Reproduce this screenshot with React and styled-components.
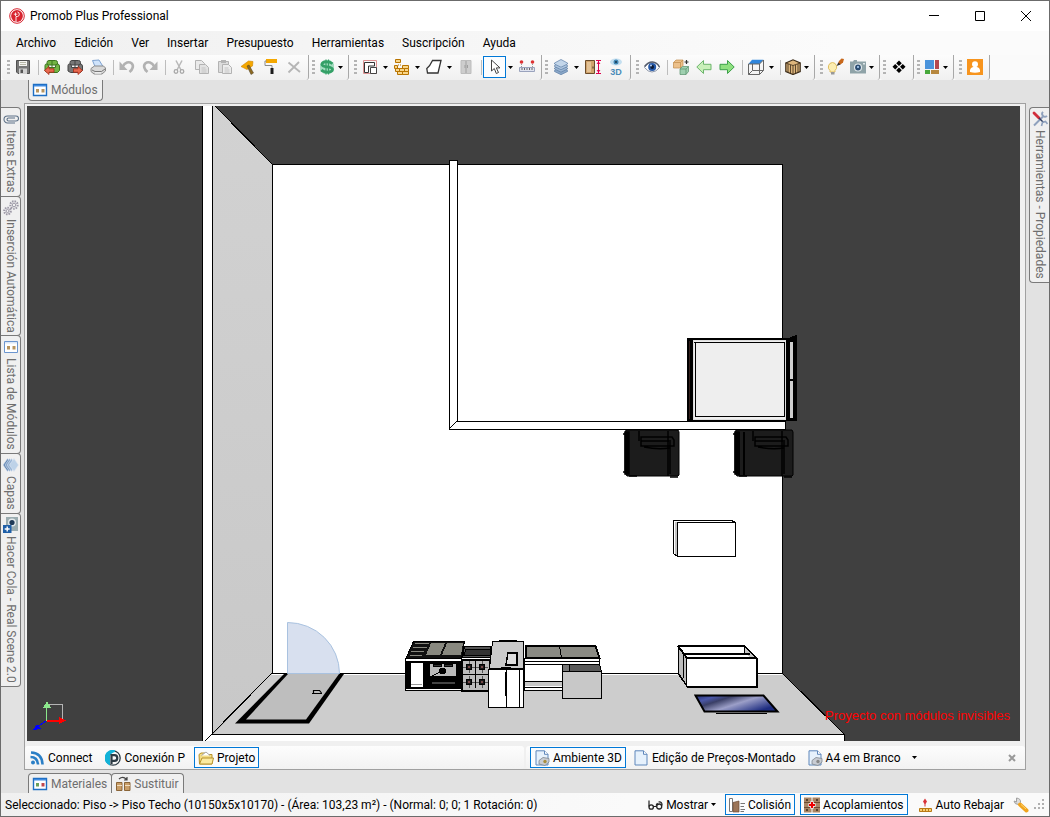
import React from "react";
import styled, { createGlobalStyle, css } from "styled-components";

const Global = createGlobalStyle`
  *, *::before, *::after { box-sizing: border-box; }
  body {
    margin: 0;
    font-family: Roboto, "Open Sans", sans-serif;
    font-size: 12px;
    line-height: 16px;
    color: #000;
  }
  button { font: inherit; color: inherit; border: 0; padding: 0; margin: 0; background: none; }
  svg { display: block; flex: none; }
`;

/* ---------- window frame ---------- */

const Window = styled.div`
  display: flex;
  flex-direction: column;
  min-height: 100vh;
  border: 1px solid #6b6b6b;
  background: #e2e2e2;
`;

const TitleBar = styled.header`
  display: flex;
  align-items: center;
  height: 30px;
  padding-left: 8px;
  background: #fff;
`;

const Title = styled.h1`
  flex: 1;
  margin: 0;
  padding-left: 5px;
  font-size: 12px;
  font-weight: 400;
`;

const WindowButton = styled.button`
  display: flex;
  align-items: center;
  justify-content: center;
  width: 46px;
  height: 30px;
`;

const MenuBar = styled.nav`
  display: flex;
  align-items: center;
  height: 24px;
  padding-left: 6px;
  background: linear-gradient(to right, #f0f0f0, #fbfbfb 80%);
`;

const MenuItem = styled.button`
  padding: 0 9px;
`;

/* ---------- main tool bar ---------- */

const ToolRow = styled.div`
  display: flex;
  height: 25px;
  padding-left: 1px;
  background: #fafafa;
`;

const ToolGroup = styled.div`
  display: flex;
  align-items: center;
  padding-left: ${(p) => (p.$wide ? 5 : 3)}px;
  padding-right: 3px;
  padding-bottom: 1px;
  border-right: 1px solid #a8a8a8;
  border-radius: 0 0 3px 3px;
  background: linear-gradient(#fcfcfc, #f0f0f0);
`;

const Grip = styled.span`
  width: 3px;
  height: 15px;
  margin-right: 1px;
  background: repeating-linear-gradient(#b4b4b4 0 2px, transparent 2px 4px);
`;

const Divider = styled.span`
  width: 1px;
  height: 15px;
  margin: 0 1px 0 4px;
  background: #bdbdbd;
`;

const ToolButton = styled.button`
  display: flex;
  align-items: center;
  justify-content: center;
  width: 23px;
  height: 22px;
  ${(p) =>
    p.$active &&
    css`
      border: 1px solid #0078d7;
      background: #fbfdff;
    `}
`;

const SplitArrow = styled(ToolButton)`
  width: 9px;
`;

const DropButton = styled(ToolButton)`
  width: 29px;
  gap: 3px;
  padding: 0 2px 0 3px;
`;

/* ---------- body ---------- */

const Body = styled.div`
  display: grid;
  grid-template-columns: 23px minmax(0, 1fr) 23px;
  flex: 1;
`;

const SideColumn = styled.aside`
  display: flex;
  flex-direction: column;
  align-items: ${(p) => (p.$right ? "flex-end" : "flex-start")};
  padding-top: 27px;
`;

const SideTab = styled.button`
  display: flex;
  align-items: center;
  gap: 3px;
  width: 20px;
  margin-bottom: -1px;
  padding: 3px 0;
  writing-mode: vertical-rl;
  line-height: 18px;
  color: #6e6e6e;
  border: 1px solid #7a7a7a;
  border-radius: ${(p) => (p.$right ? "4px 0 0 4px" : "0 4px 4px 0")};
  ${(p) => (p.$right ? "border-right: 0" : "border-left: 0")};
  background: #f0f0f0;
`;

const Center = styled.main`
  display: flex;
  flex-direction: column;
`;

const TabRow = styled.div`
  display: flex;
  height: 23px;
  padding: ${(p) => (p.$bottom ? "3px 0 0 4px" : "0 0 2px 4px")};
`;

const DockTab = styled.button`
  display: flex;
  align-items: center;
  gap: 3px;
  margin-right: -1px;
  padding: 0 4px 0 3px;
  color: #6e6e6e;
  border: 1px solid #7a7a7a;
  background: #f0f0f0;
  ${(p) =>
    p.$bottom
      ? "border-bottom: 0; border-radius: 4px 4px 0 0;"
      : "border-top: 0; border-radius: 0 0 4px 4px;"}
`;

const Frame = styled.section`
  display: flex;
  flex-direction: column;
  flex: 1;
  border: 1px solid #a0a0a0;
  background: #f0f0f0;
`;

const Viewport = styled.div`
  position: relative;
  flex: 1;
  display: flex;
  justify-content: center;
  margin: 2px 5px 5px 2px;
  background: #404040;
  > svg { width: 100%; height: 100%; }
`;

const Warning = styled.p`
  position: absolute;
  right: 10px;
  bottom: 17px;
  margin: 0;
  font-family: "Liberation Sans", Arial, sans-serif;
  font-size: 13px;
  color: #ff0000;
`;

const PageBar = styled.div`
  display: grid;
  grid-template-columns: 1fr 1fr;
  gap: 2px;
  height: 23px;
`;

const PageStrip = styled.div`
  display: flex;
  align-items: center;
  gap: ${(p) => (p.$main ? 3 : 5)}px;
  padding: ${(p) => (p.$main ? "0 5px 0 4px" : "0")};
  border-radius: 3px;
  background: linear-gradient(#fdfdfd, #f2f2f2);
`;

const TextButton = styled.button`
  display: flex;
  align-items: center;
  gap: 3px;
  height: 21px;
  padding: 0 3px;
  white-space: nowrap;
  border: 1px solid ${(p) => (p.$active ? "#0078d7" : "transparent")};
  background: ${(p) => (p.$active ? "#fafcfe" : "none")};
`;

const Spacer = styled.span`
  flex: 1;
`;

/* ---------- status bar ---------- */

const StatusBar = styled.footer`
  display: flex;
  align-items: center;
  height: 23px;
  padding: 0 4px;
  background: linear-gradient(to right, #f0f0f0, #fafafa 60%);
`;

const StatusText = styled.span`
  flex: 1;
  white-space: nowrap;
`;

const StatusActions = styled.div`
  display: flex;
  align-items: center;
  gap: 5px;
`;

/* ---------- icons ---------- */

const Icon = ({ children, size = 16 }) => (
  <svg width={size} height={size} viewBox="0 0 16 16" fill="none" aria-hidden="true">
    {children}
  </svg>
);

const Caret = () => (
  <svg width="5" height="3" viewBox="0 0 5 3" aria-hidden="true">
    <path d="M0 0h5L2.500 3z" fill="#000" />
  </svg>
);

const Logo = () => (
  <Icon>
    <circle cx="8" cy="8" r="7.300" fill="#fff" stroke="#d8232f" strokeWidth="1" />
    <circle cx="8" cy="8" r="5.900" fill="#d8232f" />
    <path d="M7 14V8.500h1.500a2.300 2.300 0 0 0 0-4.500" stroke="#fff" strokeWidth=".9" />
    <path d="M6.500 4.500v3.500M4.800 6.200h3.500" stroke="#fff" strokeWidth=".8" />
  </Icon>
);

const Save = () => (
  <Icon>
    <path d="M1.500 1.500h13v13H3L1.500 13z" fill="#777" stroke="#505050" />
    <path d="M4 2h8v5H4z" fill="#f3f3f0" />
    <path d="M5 3.500h6M5 5.500h6" stroke="#b8b8a8" />
    <path d="M4 9.500h8V15H4z" fill="#d0d0d0" />
    <path d="M5.500 10.500H8V14H5.500z" fill="#555" />
  </Icon>
);

const Sofa = ({ color, dark, out }) => (
  <Icon>
    <path d="M3 6V3.500Q3 1.500 5 1.500h6.500q2 0 2 2V6z" fill={color} stroke={dark} />
    <path d="M1 6.500Q1 5 2.500 5T4.500 7v1.500h7V7q.3-2 2-2t2 2v4.500l-2 2h-10L1 12z" fill={color} stroke={dark} />
    <path d="M8 2v6" stroke={dark} />
    {out ? (
      <path d="M15.500 11.500 11 7.500v2.300H6.500v3.400H11v2.300z" fill="#e8694f" stroke="#a62a16" strokeWidth=".8" />
    ) : (
      <path d="M.5 11.500 5 7.500v2.300h5v3.400H5v2.300z" fill="#e8694f" stroke="#a62a16" strokeWidth=".8" />
    )}
  </Icon>
);

const Printer = () => (
  <Icon>
    <path d="M2.500 1.500 9 1l4 6.500H5z" fill="#cfe3fb" stroke="#7ea2d0" />
    <path d="M1 9.500 4.500 7h9L15.500 9v3L12 15H4l-3-2.500z" fill="#d9d9d9" stroke="#8a8a8a" />
    <path d="M2 11l3 1.500h6.500L15 10" stroke="#777" />
    <path d="M5 14h6" stroke="#fff" />
  </Icon>
);

const Undo = ({ flip }) => (
  <Icon>
    <g transform={flip ? "translate(16 0) scale(-1 1)" : undefined}>
      <path d="M3.500 8C6 3.200 10 2.200 12.500 4.200c2.500 2.200 1.500 6-2 8.800" stroke="#b2b2b2" strokeWidth="2.600" />
      <path d="M.5 2.500v8.500H8.500z" fill="#b2b2b2" />
    </g>
  </Icon>
);

const Cut = () => (
  <Icon>
    <path d="M5 1.500 10 11M11 1.500 6 11" stroke="#b8b8b8" strokeWidth="1.500" />
    <circle cx="5" cy="12.500" r="1.800" stroke="#a8a8a8" strokeWidth="1.300" />
    <circle cx="11" cy="12.500" r="1.800" stroke="#a8a8a8" strokeWidth="1.300" />
  </Icon>
);

const Copy = () => (
  <Icon>
    <path d="M1.500 1.500h6l3 3v6h-9z" fill="#eaeaea" stroke="#b3b3b3" />
    <path d="M5.500 5.500h6l3 3v6h-9z" fill="#e2e2e2" stroke="#b3b3b3" />
    <path d="M7.500 9h4M7.500 11h5M7.500 13h5" stroke="#c4c4c4" />
  </Icon>
);

const Paste = () => (
  <Icon>
    <path d="M1.500 2.500h10v11h-10z" fill="#dcdcdc" stroke="#b3b3b3" />
    <path d="M4 1h5v3H4z" fill="#b3b3b3" />
    <path d="M5.500 5.500h6l3 3v6h-9z" fill="#ececec" stroke="#b3b3b3" />
    <path d="M7.500 9h4M7.500 11h5M7.500 13h5" stroke="#c4c4c4" />
  </Icon>
);

const Brush = () => (
  <Icon>
    <path d="M1 7.500 8.500 2l4.500.5L12.500 7 7 10.500z" fill="#f5a800" stroke="#cf8400" strokeWidth=".6" />
    <path d="M7 7l2-1 4.500 8-2.500 1.500z" fill="#8d6a22" stroke="#4c3d20" strokeWidth=".5" />
  </Icon>
);

const Roller = () => (
  <Icon>
    <path d="M3 0h11v4H3z" fill="#f5a800" />
    <path d="M3.500 2H2v4.500h7V9" stroke="#8a8a8a" />
    <path d="M7.500 9h3v6h-3z" fill="#1c1c1c" />
  </Icon>
);

const Remove = () => (
  <Icon>
    <path d="M2.500 3.500 14 13M13 3 2.500 13.500" stroke="#b5b5b5" strokeWidth="1.800" />
  </Icon>
);

const DollarMark = () => (
  <Icon>
    <path d="M5 1h6l4 4v6l-4 4H5l-4-4V5z" fill="#a4dcc0" />
    <path d="M13.500 4.800C11 2.500 3 2 3 5.500c0 3.600 10.500 1.300 10.500 5 0 3.600-9 3-11.200.5" stroke="#35a067" strokeWidth="2.800" />
    <path d="M7 .5v15M9.500 .5v15" stroke="#35a067" strokeWidth="1.200" />
  </Icon>
);

const Walls = () => (
  <Icon>
    <path d="M1.500 1.500h13v13h-13z" stroke="#dc9292" />
    <path d="M2.500 13.500v-10h10v3.500h-6v6.500z" fill="#fff" stroke="#333" />
    <path d="M8.500 14.500v-6h6v6z" fill="#fff" stroke="#444" />
  </Icon>
);

const Bricks = () => (
  <Icon>
    <g fill="#f9d68a" stroke="#b87400">
      <path d="M1.500 .5h5v3h-5zM5.500 9.500h5v3h-5zM.5 6.500h3v3h-3zM8.500 6.500h6v3h-6z" />
      <path d="M10.500 9.500h4v3h-4zM1.500 9.500h4v3h-4zM3.500 12.500h5v3h-5zM8.500 12.500h6v3h-6z" />
    </g>
    <path d="M4 6h4" stroke="#b87400" strokeDasharray="1 1" />
  </Icon>
);

const Shape = () => (
  <Icon>
    <path d="M6.500 1.500h8.500l-3 12.500H1.500L.8 9.500Q4 7 6.500 1.500z" fill="#fff" stroke="#333" strokeWidth="1.300" />
  </Icon>
);

const Cabinet = () => (
  <Icon>
    <path d="M3 1.500h10v13H3z" fill="#cdcdcd" stroke="#bdbdbd" />
    <path d="M8 2v12M7 6v3M9.500 6v3" stroke="#9f9f9f" />
  </Icon>
);

const Cursor = () => (
  <Icon>
    <path d="M4.500 1v11l2.800-2.500 2 5 2.200-1-2.200-4.600h3.700z" fill="#fff" stroke="#444" />
  </Icon>
);

const Measure = () => (
  <Icon>
    <path d="M.5 8.500h15v4H.5z" fill="#dfe3ef" stroke="#9aa3bd" />
    <path d="M3 9v2M5.500 9v2M8 9v2M10.500 9v2M13 9v2" stroke="#666" />
    <circle cx="2.500" cy="3" r="1.800" fill="#d33" />
    <circle cx="13.500" cy="3" r="1.800" fill="#d33" />
    <path d="M2.500 5v3M13.500 5v3" stroke="#999" strokeDasharray="1 1" />
  </Icon>
);

const Layers = () => (
  <Icon>
    {[11.5, 9, 6.5, 4].map((y, i) => (
      <path
        key={y}
        d={`M8 ${y - 3.500} 14.500 ${y}V${y + 1} L8 ${y + 4.200} 1.500 ${y + 1}V${y}z`}
        fill={["#8aa7c8", "#9bb5d2", "#adc4dd", "#c3d6ea"][i]}
        stroke="#5d7ea6"
        strokeWidth=".7"
      />
    ))}
  </Icon>
);

const DoorHeight = () => (
  <Icon>
    <path d="M.5 1.500h9v13h-9z" fill="#d0a36c" stroke="#6b4c2a" />
    <path d="M2 3h4v10H2z" fill="#e3c296" />
    <path d="M8 7.500v2" stroke="#333" />
    <path d="M11 1.500h5M11 14.500h5M13.500 2v12M12 5l1.500-2L15 5M12 11l1.500 2 1.500-2" stroke="#e0004d" />
  </Icon>
);

const View3D = () => (
  <svg width="16" height="18" viewBox="0 0 16 18" aria-hidden="true">
    <ellipse cx="8" cy="4" rx="6" ry="3.500" fill="#c4dff0" />
    <circle cx="8" cy="4" r="2.500" fill="#4187b5" />
    <circle cx="8" cy="4" r="1" fill="#16354c" />
    <text x="8" y="17" textAnchor="middle" fontFamily="Liberation Sans" fontWeight="700" fontSize="9" fill="#4a8cb8">3D</text>
  </svg>
);

const Eye = () => (
  <Icon>
    <path d="M.5 8.500Q3.500 3.500 8.500 3.500t7 5Q12 13 8 13T.5 8.500z" fill="#fff" stroke="#8b95a8" />
    <path d="M.5 7.500Q4 2.800 8.500 3t7 5" stroke="#555c6c" strokeWidth="1.300" />
    <circle cx="8.200" cy="8" r="4" fill="#2458a8" />
    <circle cx="8.200" cy="8" r="1.900" fill="#0c1a33" />
    <circle cx="7" cy="6.500" r="1" fill="#b8d0f0" />
  </Icon>
);

const Cubes = () => (
  <Icon>
    <path d="M.5 3.500 3 1h7v5.500L7.500 9h-7z" fill="#ecc08a" stroke="#c08b4a" strokeWidth=".7" />
    <path d="M.5 3.500H7.500V9M7.500 3.500 10 1" stroke="#c08b4a" strokeWidth=".7" />
    <path d="M7 10 9.500 7.500h6v5L13 15.500H7z" fill="#9fd0b0" stroke="#56906b" strokeWidth=".7" />
    <path d="M7 10h6v5.500M13 10l2.500-2.500" stroke="#56906b" strokeWidth=".7" />
    <path d="M13.500 1v4M11.500 3h4" stroke="#333" strokeWidth="1.200" />
  </Icon>
);

const Arrow = ({ right }) => (
  <Icon>
    <g transform={right ? "translate(16 0) scale(-1 1)" : undefined}>
      <path d="M.8 8 7.500 1.500v3.800h7.500v5.400H7.500v3.800z" fill={right ? "#8fe080" : "#c9f0b9"} stroke={right ? "#3da04a" : "#6cb56c"} />
    </g>
  </Icon>
);

const WireBox = () => (
  <Icon>
    <path d="M.5 5 4 .8h11.500L11.500 5z" fill="#2f86dd" />
    <path d="M.5 5h11v10.500H.5zM11.500 5l4-4v10.500l-4 4M4.500 5v6.500h11M4.500 11.500l-4 4" stroke="#666" />
  </Icon>
);

const WoodCube = () => (
  <Icon>
    <path d="M.8 4 8 .8 15.200 4v8.500L8 15.500.8 12.500z" fill="#ddb57c" stroke="#3b2b18" strokeWidth="1.200" />
    <path d="M.8 4 8 6.500 15.200 4M8 6.500v9M3 5v8M5.500 6v8.500M10.500 6v8.500M13 5v8" stroke="#3b2b18" strokeWidth=".8" />
  </Icon>
);

const Bulb = () => (
  <svg width="17" height="18" viewBox="0 0 17 18" fill="none" aria-hidden="true">
    <path d="M5.500 4.500a4.500 4.500 0 0 1 2.500 8v1.500H3V12.500a4.500 4.500 0 0 1 2.500-8z" fill="#fcedb0" stroke="#e0be60" />
    <path d="M4 14h3.500v2.500H4z" fill="#999" />
    <path d="M10.500 6.500 12 3l2.500-2.500L17 1 16 4.500 13.500 6.500z" fill="#c8681c" />
    <path d="M9.500 8 11.500 4.500l2 2z" fill="#333" />
  </svg>
);

const Camera = () => (
  <Icon>
    <path d="M0 2.500h3l1-1.500h3v1.500h9v12H0z" fill="#8fa3a8" />
    <circle cx="8" cy="8.500" r="4" fill="#e3eaec" />
    <circle cx="8" cy="8.500" r="2.900" fill="#2d4f73" />
    <path d="M7 7h2v2H7z" fill="#8fb2d8" />
    <path d="M13 4h2v1.500h-2z" fill="#dfe7e9" />
  </Icon>
);

const Diamonds = () => (
  <Icon>
    <path d="M8 1.500 10.800 4.300 8 7 5.200 4.300zM8 8.500l2.800 2.700L8 14l-2.800-2.800zM4.200 5 7 7.800 4.200 10.500 1.500 7.800zM11.800 5l2.700 2.800-2.700 2.700L9 7.800z" fill="#000" />
  </Icon>
);

const Blocks = () => (
  <Icon>
    <path d="M1 1h9v9H1z" fill="#4b94dc" />
    <path d="M11 1h4v9h-4z" fill="#b5484e" />
    <path d="M1 11h5v4H1z" fill="#46a83a" />
    <path d="M7 11h8v4H7z" fill="#b6873e" />
  </Icon>
);

const User = () => (
  <Icon>
    <path d="M0 0h16v16H0z" fill="#f7941d" />
    <circle cx="8" cy="5.200" r="3" fill="#fff" />
    <path d="M3 13v-2Q3.500 8.500 6 8h4q2.500.5 3 3v2q-5 1.500-10 0z" fill="#fff" />
  </Icon>
);

const ModuleWindow = ({ a = "#b8955f", b = "#b8955f", pale }) => (
  <Icon>
    <path d="M1.500 2.500h13v11h-13z" fill="#fff" stroke={pale ? "#6b95cf" : "#1f6fc4"} strokeWidth={pale ? 1 : 1.400} />
    <path d="M2 3h12v1.500H2z" fill={pale ? "#dbe7f7" : "#3f8be0"} />
    <path d="M4 7h3v3.500H4z" fill={a} />
    <path d="M9.500 7h3v3.500h-3z" fill={b} />
  </Icon>
);

const Swap = () => (
  <Icon>
    <path d="M4 3Q8-.5 11.500 3.500M12 1v3H9" stroke="#444" strokeWidth="1.200" />
    <path d="M1.500 6.500h5.500v8H1.500zM9.500 6.500H15v8H9.500z" fill="#c99e68" stroke="#8a6538" />
    <path d="M2 9.500h5M10 9.500h5" stroke="#f1ddc0" />
  </Icon>
);

const Clip = () => (
  <Icon>
    <path d="M12 7H5.500a1.500 1.500 0 0 0 0 3H13a2.500 2.500 0 0 0 0-5H4.500a3.500 3.500 0 0 0 0 7H12" stroke="#5d7187" strokeWidth="1.100" />
  </Icon>
);

const Gears = () => (
  <Icon>
    <g stroke="#9c98a6">
      <circle cx="11" cy="5" r="3.700" strokeWidth="2" strokeDasharray="1.500 1" />
      <circle cx="11" cy="5" r="1.800" />
      <circle cx="4.500" cy="11" r="3.300" strokeWidth="2" strokeDasharray="1.500 1" />
      <circle cx="4.500" cy="11" r="1.500" />
    </g>
  </Icon>
);

const SideLayers = () => (
  <Icon>
    {[4.5, 6.5, 8.5, 11].map((x, i) => (
      <path
        key={x}
        d={`M${x - 4.500} 8 ${x} 1.500 ${x + 4.500} 8 ${x} 14.500z`}
        fill={["#6286b3", "#7d9dc5", "#9ab6d6", "#bdd2e8"][i]}
        stroke="#dfe8f2"
        strokeWidth=".6"
      />
    ))}
  </Icon>
);

const CameraPlus = () => (
  <Icon>
    <path d="M3 0h12v14H3z" fill="#9aacb0" />
    <circle cx="9" cy="5.500" r="4" fill="#e3eaec" />
    <circle cx="9" cy="5.500" r="2.600" fill="#1f3a58" />
    <path d="M0 8h8.500v8H0z" fill="#1f5fa8" />
    <path d="M4.200 9.500v5M1.700 12h5" stroke="#fff" strokeWidth="1.400" />
  </Icon>
);

const Tools = () => (
  <Icon>
    <path d="M2 14.500 11 5.500" stroke="#8fa1bd" strokeWidth="2" />
    <path d="M11 .8a2.800 2.800 0 1 0 4 4" stroke="#8fa1bd" strokeWidth="1.800" />
    <path d="M2 2l5 5" stroke="#d12e3b" strokeWidth="2.800" strokeLinecap="round" />
    <path d="M7 7l4.500 4.500" stroke="#2f3f63" strokeWidth="1.400" />
    <path d="M9.500 15l1-3.500 3-1 2 2.500" stroke="#8fa1bd" strokeWidth="1.600" />
  </Icon>
);

const Feed = () => (
  <Icon>
    <circle cx="4" cy="12.500" r="2" fill="#2a7fc6" />
    <path d="M1.500 7Q8.500 7 9 14.500M2 2.500Q13 3 13.500 14.500" stroke="#2a7fc6" strokeWidth="2.600" />
  </Icon>
);

const Partner = () => (
  <Icon>
    <circle cx="8" cy="8" r="7.200" stroke="#2c3a44" strokeWidth="1.300" />
    <path d="M10 .3A7.900 7.900 0 0 0 5 15.400V6Q6.500 2.500 10 2z" fill="#12b2d8" />
    <path d="M6.500 14V5.200H9.500a2.700 2.700 0 0 1 0 5.600H7.500" stroke="#2c3a44" strokeWidth="2.200" />
  </Icon>
);

const Folder = () => (
  <Icon>
    <path d="M1 4.500 3 3h4l1.500 1.500H14V14H1.500z" fill="#f3dc86" stroke="#b7922b" />
    <path d="M3.500 5.500 8 2l4 3.500" fill="#fff" stroke="#aaa" />
    <path d="M1.500 14 4 8h11.500L14 14z" fill="#fbeaa0" stroke="#b7922b" />
  </Icon>
);

const Page = ({ tool }) => (
  <Icon>
    <path d="M2 .8h8.500L14 4.300V15H2z" fill="#e6f1fc" stroke="#5f87bb" />
    <path d="M10.500 .8v3.500H14" fill="#fff" stroke="#5f87bb" />
    {tool && (
      <>
        <path d="M5 10.500 9 7.500l6 1v3.500L11 15.500l-6-1.500z" fill="#c9cdd4" stroke="#7f868f" strokeWidth=".8" />
        <circle cx="11" cy="11.500" r="1.700" fill={tool} />
      </>
    )}
  </Icon>
);

const Glasses = () => (
  <Icon>
    <path d="M2 3.500v6M9 8.500l1.500-2.500M15 8.500q.5-4-3.500-3.500" stroke="#222" strokeWidth="1.200" />
    <circle cx="4.200" cy="10" r="2.200" stroke="#222" strokeWidth="1.300" />
    <circle cx="12.200" cy="9.500" r="2.500" stroke="#222" strokeWidth="1.300" />
    <path d="M6.500 9.500h3" stroke="#222" />
  </Icon>
);

const Collision = () => (
  <Icon>
    <path d="M.5 1.500h3v13h-3z" fill="#fff" stroke="#777" />
    <path d="M4 5.500 10 4v11H4z" fill="#9c7558" stroke="#6e4c33" strokeWidth=".7" />
    <path d="M11.500 6.500H16M11.500 9.500H15M11.500 12.500H16M11.500 14.500H15" stroke="#777" />
  </Icon>
);

const Couple = () => (
  <Icon>
    <path d="M0 .5h7.500v15H0zM8.500 .5H16v15H8.500z" fill="#a98565" />
    <path d="M0 5.500h16M0 10.500h16" stroke="#6e4c33" />
    <path d="M2 3h2M12 3h2M2 13h2M12 13h2" stroke="#3b2a1c" strokeWidth="1.500" />
    <path d="M8 4.500v7M4.500 8h7" stroke="#fff" strokeWidth="3.600" />
    <path d="M8 5v6M5 8h6" stroke="#e00" strokeWidth="2.200" />
  </Icon>
);

const AutoLower = () => (
  <Icon>
    <path d="M8 1.500 10 4.500 8.500 7v2.500h-1V7L6 4.500z" fill="#d8333a" />
    <path d="M2.500 11.500h12v3h-12z" fill="#f8cf74" stroke="#b97a14" />
    <path d="M5.500 12v2M8.500 12v2M11.500 12v2" stroke="#b97a14" />
  </Icon>
);

const Wrench = () => (
  <Icon>
    <path d="M3.500 1Q8 1.500 7.500 5.500l-2 2Q1.500 7.500 1 4l2.500 1z" fill="#dcdcdc" stroke="#a0a0a0" />
    <path d="M7 7.500 13.500 13.500" stroke="#f0a41e" strokeWidth="4" strokeLinecap="round" />
    <path d="M8 7.500 13 12" stroke="#ffd66e" />
  </Icon>
);

const ResizeGrip = () => (
  <svg width="11" height="11" viewBox="0 0 11 11" fill="#b0b0b0" aria-hidden="true">
    <path d="M8 0h2v2H8zM4 4h2v2H4zM8 4h2v2H8zM0 8h2v2H0zM4 8h2v2H4zM8 8h2v2H8z" />
  </svg>
);

/* ---------- 3D scene ---------- */

const burners = [[469, 667], [482, 667], [469, 682], [482, 682]];

const Armchair = ({ x, w }) => (
  <g transform={`translate(${x} 430)`}>
    <path d={`M2 0H${w - 2}L${w - 1} 2V45L${w - 2} 46H3L1 43V3z`} fill="#1c1c1c" stroke="#000" />
    <path d={`M1 2h4v42H1zM${w - 12} 1v45M${w - 10} 12v32`} fill="#000" stroke="#000" strokeWidth="1.500" />
    <path d={`M${w - 41} 1v10M${w - 39} 7h31l2 3v6h-33zM${w - 39} 11h30M${w - 36} 17q14 3 26 1M5 46h8M${w - 10} 47h8M-1 4h3M-1 42h3`} stroke="#000" strokeWidth="1.500" />
  </g>
);

const Scene = () => (
  <svg viewBox="27 106 993 635" preserveAspectRatio="xMidYMid meet" fill="none" role="img" aria-label="Ambiente 3D">
    <defs>
      <linearGradient id="screen" x1="0" y1="0" x2="1" y2="0.6">
        <stop offset="0" stopColor="#232f74" />
        <stop offset=".2" stopColor="#4a57a8" />
        <stop offset=".35" stopColor="#3a3f66" />
        <stop offset=".6" stopColor="#9c9fc8" />
        <stop offset="1" stopColor="#1d2c80" />
      </linearGradient>
      <linearGradient id="sideWall" x1="0" y1="0" x2="0" y2="1">
        <stop offset="0" stopColor="#d2d2d2" />
        <stop offset="1" stopColor="#c8c8c8" />
      </linearGradient>
    </defs>

    {/* room shell */}
    <path d="M203 106h10v628h631v7H203z" fill="#fff" />
    <path d="M213 106h2l57 58v509l-59 61z" fill="url(#sideWall)" />
    <path d="M272 673h510l62 61H213z" fill="#cdcdcd" />
    <path d="M272 164h510v511H272z" fill="#fff" />
    <g stroke="#000" shapeRendering="crispEdges">
      <path d="M212.500 106v628.500H845M202.500 106v635M272.500 673V164.500h510V673.500M272 673.500h510M215 106l57 58M272 673l-67 68M782 673l62 61v7" />
      <path d="M449.500 429.500v-269h8v261H785v8z" fill="#fff" />
      <path d="M449 429l8-8" />
    </g>

    {/* door and its swing */}
    <path d="M287.500 673.500v-51a52 51 0 0 1 52 51z" fill="#d8e0ef" stroke="#a9c2e0" />
    <path d="M284 674 235 723.500h74l35-49.500z" fill="#000" />
    <path d="M288 674 246 719.500h60l33-45.500z" fill="#bebebe" />
    <path d="M313.500 690.500h6l2 2.500M312 693.500h10M313.500 690v3" stroke="#000" strokeWidth="1.200" />

    {/* kitchen */}
    <g stroke="#000" shapeRendering="crispEdges">
      <path d="M413.500 641.500h51l-3 18h-56z" fill="#111" />
      <path d="M431 643h14l-5 12h-14zM447 643h16l-2 12h-19z" fill="#898980" stroke="none" />
      <path d="M415 643l14 1M413 647l14 1M411 651l13 1M410 655l12 1" stroke="#898980" />
      <path d="M405.500 658.500h56v32h-56z" fill="#fff" />
      <path d="M406 661.500h55M406 687.500h55" strokeWidth="2" />
      <path d="M406 662h4v25h-4zM423 661h37v26h-37z" fill="#000" />
      <path d="M411 684h11" stroke="#999" />
      <path d="M429 663h28l-1 13h-26z" fill="#bababa" />
      <path d="M433 664h8v2h-8zM444 664h8v2h-8z" fill="#333" />
      <path d="M430 677l10-5" />
      <circle cx="442.500" cy="671" r="3" fill="#000" />
      <path d="M431 681h24v3h-24z" fill="#444" />
      <path d="M464.500 646.500h26v11h-28z" fill="#555" />
      <path d="M466 649h24v6h-26z" fill="#333" />
      <path d="M461.500 659.500h28v31h-28z" fill="#bcbcbc" strokeWidth="2" />
      <path d="M475.500 660v28M462 674.500h27" />
      {burners.map(([x, y]) => (
        <g key={`${x}-${y}`}>
          <path d={`M${x - 6} ${y}h12M${x} ${y - 6}v12`} stroke="#555" />
          <circle cx={x} cy={y} r="3" fill="#191919" />
          <circle cx={x} cy={y} r="1" fill="#764848" stroke="none" />
        </g>
      ))}
      <path d="M525.500 646h70l4 12h-74z" fill="#8a8a83" strokeWidth="2" />
      <path d="M559.500 646l2 12" />
      <path d="M524.500 658.500h75v32h-75z" fill="#fff" />
      <path d="M525 661.500h75M525 664.500h38M525 687.500h38" />
      <path d="M525 682h37v4h-37z" fill="#c8c8c8" stroke="none" />
      <path d="M525 681.500h37" />
      <path d="M562.500 664.500h37l2 7h-39z" fill="#595959" />
      <path d="M562.500 671.500h39v27h-39z" fill="#c8c8c8" />
      <path d="M562 664h7v7h-7z" fill="#777" />
      <path d="M492.500 641.500h31v27h-34z" fill="#cacaca" />
      <path d="M499 640.500h18" strokeWidth="2" />
      <path d="M508 653h9v12h-11z" fill="#ddd" strokeWidth="1.500" />
      <path d="M488.500 669.500h35v38h-35z" fill="#fff" />
      <path d="M489 669h34M506.500 670v37M519.500 670v37" />
      <path d="M501 668h10M506 672v24" strokeWidth="2" />
    </g>

    {/* wardrobe */}
    <g stroke="#000" shapeRendering="crispEdges">
      <path d="M687.500 339l101-.5 8-3v85h-109z" fill="#000" />
      <path d="M693.500 340.500h92v79h-92z" fill="#eee" stroke="#ddd" />
      <path d="M695.500 342.500h89v74h-89z" fill="#eee" />
      <path d="M694 342h91" strokeWidth="1" />
      <path d="M689.500 341v78" stroke="#35201c" />
      <path d="M790 342h3v76h-3z" fill="#cfcfcf" stroke="none" />
      <path d="M790 380h3" strokeWidth="2" />
    </g>

    <Armchair x={624} w={56} />
    <Armchair x={734} w={60} />
    <path d="M744 432v43M739 432v43" stroke="#000" strokeWidth="2" />

    {/* loose modules */}
    <g stroke="#000" shapeRendering="crispEdges">
      <path d="M673.500 520.500h58l4 2v34h-58l-4-3z" fill="#fff" />
      <path d="M674.500 521l3 2v33l-3-3z" fill="#c4c4c4" stroke="none" />
      <path d="M677.500 522.500h58v34h-58z" fill="#fff" />
      <path d="M678.500 645.500h65l13 13v28h-69l-9-13z" fill="#fff" strokeWidth="2" />
      <path d="M679 648l8 11v26l-8-12z" fill="#bdbdbd" stroke="none" />
      <path d="M683 654v24M744 646v8M750 655v4" />
      <path d="M745 648l10 10h-5l-5-5z" fill="#c8c8c8" stroke="none" />
      <path d="M678 646l9 12M684 654h66M686 658h71" strokeWidth="2" />
      <path d="M686.500 658.500h70v28h-70z" fill="#fff" />
    </g>
    <path d="M695.500 695.500h68l14 16h-73z" fill="url(#screen)" stroke="#000" strokeWidth="2" />
    <path d="M716 713.500h51" stroke="#000" />

    {/* axis marker */}
    <g shapeRendering="crispEdges">
      <path d="M47 704.500h15.500V720" stroke="#b4b4b4" />
      <path d="M46.500 721V706" stroke="#8be78b" />
      <path d="M43 708l4-7 4 7z" fill="#8be78b" />
      <path d="M47 720.500h14" stroke="#f00" strokeWidth="2" />
      <path d="M59 717l7 3.500-7 3.500z" fill="#f00" />
      <path d="M46 721l-9 6" stroke="#00f" />
      <path d="M33 730l4-6 4 5z" fill="#00f" />
    </g>
  </svg>
);

/* ---------- content ---------- */

const menus = ["Archivo", "Edición", "Ver", "Insertar", "Presupuesto", "Herramientas", "Suscripción", "Ayuda"];

const sideTabs = [
  ["Itens Extras", <Clip />],
  ["Inserción Automática", <Gears />],
  ["Lista de Módulos", <ModuleWindow pale />],
  ["Capas", <SideLayers />],
  ["Hacer Cola - Real Scene 2.0", <CameraPlus />],
];

const Tool = ({ label, icon, active }) => (
  <ToolButton aria-label={label} $active={active}>{icon}</ToolButton>
);

const SplitTool = ({ label, icon, active }) => (
  <>
    <Tool label={label} icon={icon} active={active} />
    <SplitArrow aria-label={`${label}: opciones`}><Caret /></SplitArrow>
  </>
);

const DropTool = ({ label, icon }) => (
  <DropButton aria-label={label}>{icon}<Caret /></DropButton>
);

const MainTools = () => (
  <ToolRow role="toolbar">
    <ToolGroup $wide>
      <Grip />
      <Tool label="Guardar" icon={<Save />} />
      <Divider />
      <Tool label="Importar" icon={<Sofa color="#72b443" dark="#3c7420" />} />
      <Tool label="Exportar" icon={<Sofa color="#777" dark="#444" out />} />
      <Tool label="Imprimir" icon={<Printer />} />
      <Divider />
      <Tool label="Deshacer" icon={<Undo />} />
      <Tool label="Rehacer" icon={<Undo flip />} />
      <Divider />
      <Tool label="Cortar" icon={<Cut />} />
      <Tool label="Copiar" icon={<Copy />} />
      <Tool label="Pegar" icon={<Paste />} />
      <Tool label="Pincel" icon={<Brush />} />
      <Tool label="Rodillo" icon={<Roller />} />
      <Tool label="Eliminar" icon={<Remove />} />
    </ToolGroup>
    <ToolGroup>
      <Grip />
      <DropTool label="Presupuesto" icon={<DollarMark />} />
    </ToolGroup>
    <ToolGroup $wide>
      <Grip />
      <SplitTool label="Paredes" icon={<Walls />} />
      <SplitTool label="Ladrillos" icon={<Bricks />} />
      <SplitTool label="Piso" icon={<Shape />} />
      <Tool label="Armario" icon={<Cabinet />} />
      <Divider />
      <SplitTool label="Seleccionar" icon={<Cursor />} active />
      <Tool label="Medir" icon={<Measure />} />
    </ToolGroup>
    <ToolGroup>
      <Grip />
      <SplitTool label="Capas" icon={<Layers />} />
      <Tool label="Altura" icon={<DoorHeight />} />
      <Tool label="Vista 3D" icon={<View3D />} />
    </ToolGroup>
    <ToolGroup $wide>
      <Grip />
      <Tool label="Visualizar" icon={<Eye />} />
      <Divider />
      <Tool label="Módulos" icon={<Cubes />} />
      <Tool label="Anterior" icon={<Arrow />} />
      <Tool label="Siguiente" icon={<Arrow right />} />
      <Divider />
      <SplitTool label="Vista superior" icon={<WireBox />} />
      <Divider />
      <DropTool label="Textura" icon={<WoodCube />} />
    </ToolGroup>
    <ToolGroup $wide>
      <Grip />
      <Tool label="Luces" icon={<Bulb />} />
      <DropTool label="Cámara" icon={<Camera />} />
    </ToolGroup>
    <ToolGroup>
      <Grip />
      <Tool label="Complementos" icon={<Diamonds />} />
    </ToolGroup>
    <ToolGroup>
      <Grip />
      <DropTool label="Diseño" icon={<Blocks />} />
    </ToolGroup>
    <ToolGroup $wide>
      <Grip />
      <Tool label="Usuario" icon={<User />} />
    </ToolGroup>
  </ToolRow>
);

export default function App() {
  return (
    <>
      <Global />
      <Window>
        <TitleBar>
          <Logo />
          <Title>Promob Plus Professional</Title>
          <WindowButton aria-label="Minimizar">
            <svg width="10" height="10" viewBox="0 0 10 10"><path d="M0 4.500h10" stroke="#000" /></svg>
          </WindowButton>
          <WindowButton aria-label="Maximizar">
            <svg width="10" height="10" viewBox="0 0 10 10"><path d="M.5 .5h9v9h-9z" fill="none" stroke="#000" /></svg>
          </WindowButton>
          <WindowButton aria-label="Cerrar">
            <svg width="10" height="10" viewBox="0 0 10 10"><path d="M0 0l10 10M10 0 0 10" stroke="#000" /></svg>
          </WindowButton>
        </TitleBar>
        <MenuBar>
          {menus.map((m) => <MenuItem key={m}>{m}</MenuItem>)}
        </MenuBar>
        <MainTools />
        <Body>
          <SideColumn>
            {sideTabs.map(([label, icon]) => (
              <SideTab key={label}>{icon}{label}</SideTab>
            ))}
          </SideColumn>
          <Center>
            <TabRow>
              <DockTab><ModuleWindow />Módulos</DockTab>
            </TabRow>
            <Frame>
              <Viewport>
                <Scene />
                <Warning>Proyecto con módulos invisibles</Warning>
              </Viewport>
              <PageBar>
                <PageStrip>
                  <TextButton><Feed />Connect</TextButton>
                  <TextButton><Partner />Conexión P</TextButton>
                  <TextButton $active><Folder />Projeto</TextButton>
                </PageStrip>
                <PageStrip $main>
                  <TextButton $active><Page tool="#a98f3f" />Ambiente 3D</TextButton>
                  <TextButton><Page />Edição de Preços-Montado</TextButton>
                  <TextButton><Page tool="#888" />A4 em Branco</TextButton>
                  <TextButton aria-label="Más páginas"><Caret /></TextButton>
                  <Spacer />
                  <TextButton aria-label="Cerrar página">
                    <svg width="8" height="8" viewBox="0 0 8 8"><path d="M1 1l6 6M7 1 1 7" stroke="#999" strokeWidth="2" /></svg>
                  </TextButton>
                </PageStrip>
              </PageBar>
            </Frame>
            <TabRow $bottom>
              <DockTab $bottom><ModuleWindow a="#6ba05a" b="#c0474e" />Materiales</DockTab>
              <DockTab $bottom><Swap />Sustituir</DockTab>
            </TabRow>
          </Center>
          <SideColumn $right>
            <SideTab $right><Tools />Herramientas - Propiedades</SideTab>
          </SideColumn>
        </Body>
        <StatusBar>
          <StatusText>
            Seleccionado: Piso -&gt; Piso Techo (10150x5x10170) - (Área: 103,23 m²) - (Normal: 0; 0; 1 Rotación: 0)
          </StatusText>
          <StatusActions>
            <TextButton><Glasses />Mostrar<Caret /></TextButton>
            <TextButton $active><Collision />Colisión</TextButton>
            <TextButton $active><Couple />Acoplamientos</TextButton>
            <TextButton><AutoLower />Auto Rebajar</TextButton>
            <Wrench />
            <ResizeGrip />
          </StatusActions>
        </StatusBar>
      </Window>
    </>
  );
}
